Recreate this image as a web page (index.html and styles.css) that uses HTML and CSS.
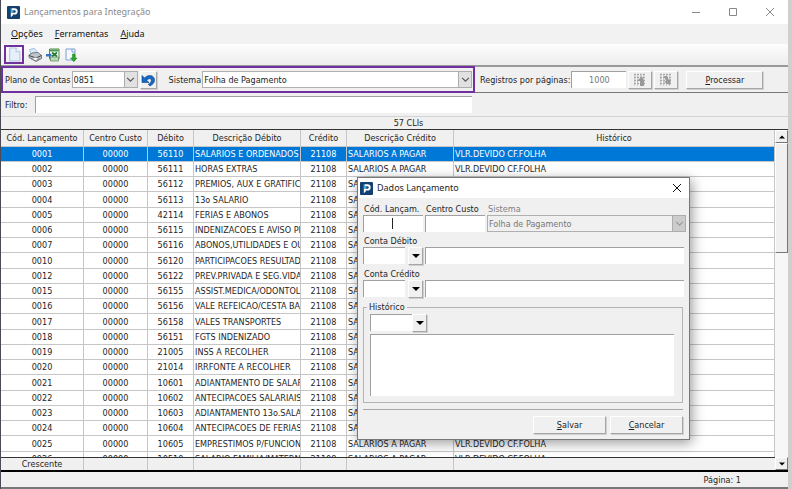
FILE: index.html
```html
<!DOCTYPE html>
<html lang="pt-BR">
<head>
    <meta charset="UTF-8">
    <title>Lançamentos para Integração</title>
    <link rel="stylesheet" href="styles.css">
</head>
<body>
<div class="window">
    <header class="titlebar">
        <svg class="logo" viewBox="0 0 13 13"><rect width="13" height="13" rx="1" fill="#12406f"/><path d="M4.500 3.200H7.500a2.200 2.200 0 0 1 0 4.400H5" fill="none" stroke="#fff" stroke-width="1.900"/><path d="M3.800 6.500v4.700l2-1.600V6.500z" fill="#fff"/><path d="M3.500 2.300l3.500 3-3.200 1.600z" fill="#3fb4ea"/></svg>
        <h1>Lançamentos para Integração</h1>
        <div class="controls">
            <button type="button" aria-label="Minimizar"><svg viewBox="0 0 10 10"><path d="M1 5.500h8"/></svg></button>
            <button type="button" aria-label="Maximizar"><svg viewBox="0 0 10 10"><path d="M1.500 1.500h7v7h-7z"/></svg></button>
            <button type="button" aria-label="Fechar"><svg viewBox="0 0 10 10"><path d="M1 1l8 8M9 1l-8 8"/></svg></button>
        </div>
    </header>
    <nav class="menu">
        <a href="#"><u>O</u>pções</a>
        <a href="#"><u>F</u>erramentas</a>
        <a href="#"><u>A</u>juda</a>
    </nav>
    <div class="toolbar">
        <button type="button" class="marked" aria-label="Novo">
            <svg viewBox="0 0 14 14"><path d="M2.500 1h6l3.500 3.500V13h-9.500z" fill="#e6effa" stroke="#b4c6de"/><path d="M8.500 1v3.500H12" fill="#fff" stroke="#b4c6de"/></svg>
        </button>
        <button type="button" aria-label="Imprimir">
            <svg viewBox="0 0 14 14"><path d="M3 6L1.500 1.500l5-1.200L9.500 5z" fill="#d7eafb" stroke="#8bb0d4" stroke-width=".7"/><path d="M1 7l3-2 6-.5 3.500 3v3L8 13.500l-7-4z" fill="#c2c6cc" stroke="#596069" stroke-width=".8"/><path d="M1 7.500l7 2.500 5.500-2.500" fill="none" stroke="#3d434b"/><path d="M3 10.500l4.500 2 4-2-4-1.200z" fill="#fff" stroke="#666" stroke-width=".6"/></svg>
        </button>
        <button type="button" aria-label="Exportar para Excel">
            <svg viewBox="0 0 14 14"><path d="M3.500 1h9.500v10H3.500z" fill="#fff" stroke="#4d8b4d"/><path d="M4 1.500h8.500v2H4z" fill="#4c9a4c"/><path d="M6 4.500l5 4M11 4.500l-5 4" stroke="#227a2c" stroke-width="1.700"/><path d="M4.500 9h8v4h-8z" fill="#b8dab8" stroke="#5a865a" stroke-width=".7"/><path d="M0 6h3V4l3 3.200-3 3V8.500H0z" fill="#3774c5"/></svg>
        </button>
        <button type="button" aria-label="Baixar">
            <svg viewBox="0 0 14 14"><path d="M2 1h9v11H2z" fill="#f3f8ff" stroke="#7e9fd0"/><path d="M8 1v3h3" fill="none" stroke="#7e9fd0"/><path d="M8.500 6h2.500v4h2L9.800 13.700 6.500 10h2z" fill="#28a628" stroke="#157c15" stroke-width=".5"/></svg>
        </button>
    </div>

    <div class="params">
        <div class="plan">
            <label for="plano">Plano de Contas</label>
            <div class="combo short">
                <select id="plano"><option>0851</option></select>
                <span class="arrow"><svg viewBox="0 0 8 8"><path d="M1 2.500l3 3 3-3"/></svg></span>
            </div>
            <button type="button" class="raised undo" aria-label="Desfazer">
                <svg viewBox="0 0 14 14"><path d="M1 2.500v7h7L5.700 7.300C7.500 5 10.300 5.200 10.300 7.500c0 1.600-1.300 2.600-3 3.700l1.500 1.800c2.800-1.300 4.700-3.300 4.700-6C13.500 2.200 7.500.8 3.500 5z" fill="#1769c4" stroke="#0b4288" stroke-width=".6"/></svg>
            </button>
            <label class="sys" for="sistema">Sistema</label>
            <div class="combo grow">
                <select id="sistema"><option>Folha de Pagamento</option></select>
                <span class="arrow"><svg viewBox="0 0 8 8"><path d="M1 2.500l3 3 3-3"/></svg></span>
            </div>
        </div>
        <div class="paging">
            <label for="registros">Registros por páginas:</label>
            <input id="registros" class="sunken" type="text" value="1000" disabled>
            <button type="button" class="raised page" aria-label="Página anterior" disabled>
                <svg viewBox="0 0 14 14"><path class="dither" d="M1 1.500h12M1 4.500h12M1 7.500h12M1 10.500h12"/><path class="dither odd" d="M1 3h12M1 6h12M1 9h12M1 12h12"/><path class="dark" d="M9 3L4 8h3v5h4V8z"/></svg>
            </button>
            <button type="button" class="raised page" aria-label="Próxima página" disabled>
                <svg viewBox="0 0 14 14"><path class="dither" d="M1 1.500h12M1 4.500h12M1 7.500h12M1 10.500h12"/><path class="dither odd" d="M1 3h12M1 6h12M1 9h12M1 12h12"/><path class="dark" d="M5 3l2 5-2 1 6 3 1-6-2 1-2-4z"/></svg>
            </button>
            <button type="button" class="raised process"><span><u>P</u>rocessar</span></button>
        </div>
    </div>

    <div class="filter">
        <label for="filtro">Filtro:</label>
        <input id="filtro" class="sunken" type="text">
    </div>
    <div class="caption">57 CLIs</div>

    <div class="grid">
        <div class="rows">
            <table>
                <colgroup>
                    <col class="c-code"><col class="c-center"><col class="c-account"><col class="c-desc"><col class="c-account"><col class="c-desc"><col>
                </colgroup>
                <thead>
                    <tr><th>Cód. Lançamento</th><th>Centro Custo</th><th>Débito</th><th>Descrição Débito</th><th>Crédito</th><th>Descrição Crédito</th><th>Histórico</th></tr>
                </thead>
                <tbody>
                    <tr class="on"><td>0001</td><td>00000</td><td>56110</td><td>SALARIOS E ORDENADOS</td><td>21108</td><td>SALARIOS A PAGAR</td><td>VLR.DEVIDO CF.FOLHA</td></tr>
                    <tr><td>0002</td><td>00000</td><td>56111</td><td>HORAS EXTRAS</td><td>21108</td><td>SALARIOS A PAGAR</td><td>VLR.DEVIDO CF.FOLHA</td></tr>
                    <tr><td>0003</td><td>00000</td><td>56112</td><td>PREMIOS, AUX E GRATIFICACOES</td><td>21108</td><td>SALARIOS A PAGAR</td><td>VLR.DEVIDO CF.FOLHA</td></tr>
                    <tr><td>0004</td><td>00000</td><td>56113</td><td>13o SALARIO</td><td>21108</td><td>SALARIOS A PAGAR</td><td>VLR.DEVIDO CF.FOLHA</td></tr>
                    <tr><td>0005</td><td>00000</td><td>42114</td><td>FERIAS E ABONOS</td><td>21108</td><td>SALARIOS A PAGAR</td><td>VLR.DEVIDO CF.FOLHA</td></tr>
                    <tr><td>0006</td><td>00000</td><td>56115</td><td>INDENIZACOES E AVISO PREVIO</td><td>21108</td><td>SALARIOS A PAGAR</td><td>VLR.DEVIDO CF.FOLHA</td></tr>
                    <tr><td>0007</td><td>00000</td><td>56116</td><td>ABONOS,UTILIDADES E OUTROS</td><td>21108</td><td>SALARIOS A PAGAR</td><td>VLR.DEVIDO CF.FOLHA</td></tr>
                    <tr><td>0010</td><td>00000</td><td>56120</td><td>PARTICIPACOES RESULTADOS</td><td>21108</td><td>SALARIOS A PAGAR</td><td>VLR.DEVIDO CF.FOLHA</td></tr>
                    <tr><td>0012</td><td>00000</td><td>56122</td><td>PREV.PRIVADA E SEG.VIDA</td><td>21108</td><td>SALARIOS A PAGAR</td><td>VLR.DEVIDO CF.FOLHA</td></tr>
                    <tr><td>0015</td><td>00000</td><td>56155</td><td>ASSIST.MEDICA/ODONTOLOGICA</td><td>21108</td><td>SALARIOS A PAGAR</td><td>VLR.DEVIDO CF.FOLHA</td></tr>
                    <tr><td>0016</td><td>00000</td><td>56156</td><td>VALE REFEICAO/CESTA BASICA</td><td>21108</td><td>SALARIOS A PAGAR</td><td>VLR.DEVIDO CF.FOLHA</td></tr>
                    <tr><td>0017</td><td>00000</td><td>56158</td><td>VALES TRANSPORTES</td><td>21108</td><td>SALARIOS A PAGAR</td><td>VLR.DEVIDO CF.FOLHA</td></tr>
                    <tr><td>0018</td><td>00000</td><td>56151</td><td>FGTS INDENIZADO</td><td>21108</td><td>SALARIOS A PAGAR</td><td>VLR.DEVIDO CF.FOLHA</td></tr>
                    <tr><td>0019</td><td>00000</td><td>21005</td><td>INSS A RECOLHER</td><td>21108</td><td>SALARIOS A PAGAR</td><td>VLR.DEVIDO CF.FOLHA</td></tr>
                    <tr><td>0020</td><td>00000</td><td>21014</td><td>IRRFONTE A RECOLHER</td><td>21108</td><td>SALARIOS A PAGAR</td><td>VLR.DEVIDO CF.FOLHA</td></tr>
                    <tr><td>0021</td><td>00000</td><td>10601</td><td>ADIANTAMENTO DE SALARIOS</td><td>21108</td><td>SALARIOS A PAGAR</td><td>VLR.DEVIDO CF.FOLHA</td></tr>
                    <tr><td>0022</td><td>00000</td><td>10602</td><td>ANTECIPACOES SALARIAIS</td><td>21108</td><td>SALARIOS A PAGAR</td><td>VLR.DEVIDO CF.FOLHA</td></tr>
                    <tr><td>0023</td><td>00000</td><td>10603</td><td>ADIANTAMENTO 13o.SALARIO</td><td>21108</td><td>SALARIOS A PAGAR</td><td>VLR.DEVIDO CF.FOLHA</td></tr>
                    <tr><td>0024</td><td>00000</td><td>10604</td><td>ANTECIPACOES DE FERIAS</td><td>21108</td><td>SALARIOS A PAGAR</td><td>VLR.DEVIDO CF.FOLHA</td></tr>
                    <tr><td>0025</td><td>00000</td><td>10605</td><td>EMPRESTIMOS P/FUNCIONARIOS</td><td>21108</td><td>SALARIOS A PAGAR</td><td>VLR.DEVIDO CF.FOLHA</td></tr>
                    <tr><td>0026</td><td>00000</td><td>10510</td><td>SALARIO FAMILIA/MATERNIDADE</td><td>21108</td><td>SALARIOS A PAGAR</td><td>VLR.DEVIDO CF.FOLHA</td></tr>
                </tbody>
            </table>
        </div>
        <div class="scroll">
            <button type="button" aria-label="Subir"><svg viewBox="0 0 8 8"><path d="M1 5.500h6l-3-3z"/></svg></button>
            <div class="thumb"></div>
            <div class="track"></div>
            <button type="button" aria-label="Descer"><svg viewBox="0 0 8 8"><path d="M1 2.500h6l-3 3z"/></svg></button>
        </div>
        <div class="summary">
            <span class="s-code">Crescente</span><span class="s-center"></span><span class="s-account"></span><span class="s-desc"></span><span class="s-account"></span><span class="s-desc"></span>
        </div>
    </div>
    <footer class="status">Página: 1</footer>
</div>

<form class="dialog" role="dialog" aria-labelledby="dlg-title">
    <div class="dlg-title">
        <svg class="logo" viewBox="0 0 13 13"><rect width="13" height="13" rx="1" fill="#12406f"/><path d="M4.500 3.200H7.500a2.200 2.200 0 0 1 0 4.400H5" fill="none" stroke="#fff" stroke-width="1.900"/><path d="M3.800 6.500v4.700l2-1.600V6.500z" fill="#fff"/><path d="M3.500 2.300l3.500 3-3.200 1.600z" fill="#3fb4ea"/></svg>
        <h2 id="dlg-title">Dados Lançamento</h2>
        <button type="button" class="close" aria-label="Fechar"><svg viewBox="0 0 10 10"><path d="M1 1l8 8M9 1l-8 8"/></svg></button>
    </div>
    <div class="dlg-body">
        <div class="line first">
            <div class="field code">
                <label for="cod">Cód. Lançam.</label>
                <div class="caret-box"><input id="cod" class="sunken" type="text"><i class="caret"></i></div>
            </div>
            <div class="field code">
                <label for="centro">Centro Custo</label>
                <input id="centro" class="sunken" type="text">
            </div>
            <div class="field grow off">
                <label for="sis">Sistema</label>
                <div class="combo">
                    <select id="sis" disabled><option>Folha de Pagamento</option></select>
                    <span class="arrow"><svg viewBox="0 0 8 8"><path d="M1 2.500l3 3 3-3"/></svg></span>
                </div>
            </div>
        </div>
        <div class="field account">
            <label for="debito">Conta Débito</label>
            <div class="line">
                <input id="debito" class="sunken num" type="text">
                <button type="button" class="raised drop" aria-label="Buscar conta débito"><svg viewBox="0 0 8 8"><path d="M0 2h8L4 6z"/></svg></button>
                <input class="sunken name" type="text" aria-label="Descrição da conta débito">
            </div>
        </div>
        <div class="field account">
            <label for="credito">Conta Crédito</label>
            <div class="line">
                <input id="credito" class="sunken num" type="text">
                <button type="button" class="raised drop" aria-label="Buscar conta crédito"><svg viewBox="0 0 8 8"><path d="M0 2h8L4 6z"/></svg></button>
                <input class="sunken name" type="text" aria-label="Descrição da conta crédito">
            </div>
        </div>
        <fieldset>
            <legend>Histórico</legend>
            <div class="line">
                <input class="sunken num" type="text" aria-label="Código do histórico">
                <button type="button" class="raised drop" aria-label="Buscar histórico"><svg viewBox="0 0 8 8"><path d="M0 2h8L4 6z"/></svg></button>
            </div>
            <textarea class="sunken" aria-label="Texto do histórico"></textarea>
        </fieldset>
        <div class="actions">
            <button type="submit" class="raised"><span><u>S</u>alvar</span></button>
            <button type="button" class="raised"><span><u>C</u>ancelar</span></button>
        </div>
    </div>
</form>
</body>
</html>
```
FILE: styles.css
```css
* {
    box-sizing: border-box;
    margin: 0;
    padding: 0;
}

body {
    height: 100vh;
    overflow: hidden;
    padding: 0 4px 0 1px;
    background: linear-gradient(90deg, #4b4b55 1px, #cfcfcf 1px);
    color: #1e1e1e;
    font-family: "DejaVu Sans Condensed", "DejaVu Sans", sans-serif;
    font-size: 9px;
    line-height: 12px;
}
button, input, select, textarea {
    font: inherit;
    color: inherit;
    border: 0;
    border-radius: 0;
    background: none;
}
svg {
    display: block;
}
.window {
    display: flex;
    flex-direction: column;
    height: 100%;
    background: #f0f0f0;
}

/* title bar */
.titlebar {
    display: flex;
    align-items: center;
    height: 24px;
    padding-left: 6px;
    background: #fff;
    color: #888;
}
.logo {
    width: 13px;
    height: 13px;
}
h1, h2 {
    flex: 1;
    margin-left: 4px;
    font-family: "Noto Sans", sans-serif;
    font-size: 9px;
    font-weight: normal;
}
.controls {
    display: flex;
}
.controls button {
    width: 37px;
    height: 22px;
}
.controls svg, .close svg {
    width: 10px;
    height: 10px;
    margin: 0 auto;
    fill: none;
    stroke: #888;
}
.menu {
    display: flex;
    gap: 12px;
    height: 20px;
    padding-left: 10px;
    align-items: center;
    background: #f2f2f2;
    font-family: "Noto Sans", sans-serif;
}
.menu a {
    color: #111;
    text-decoration: none;
}
.toolbar {
    display: flex;
    align-items: center;
    gap: 4px;
    height: 21px;
    padding-left: 3px;
    background: linear-gradient(#fdfdfd, #ededed);
}
.toolbar button {
    width: 14px;
    height: 14px;
}
.toolbar .marked {
    width: 20px;
    height: 19px;
    border: 2px solid #7030a0;
}
.toolbar .marked svg {
    height: 15px;
    margin: 0 auto;
}

/* controls shared by the window and the dialog */
.sunken {
    min-width: 0;
    height: 17px;
    padding: 0 3px;
    border-top: 1px solid #a0a0a0;
    border-left: 1px solid #a0a0a0;
    background: #fff;
}
.raised {
    height: 18px;
    border: 1px solid;
    border-color: #fff #a6a6a6 #a6a6a6 #fff;
    background: #f0f0f0;
    box-shadow: 1px 1px #d0d0d0;
}
.raised svg {
    width: 14px;
    height: 14px;
    margin: 0 auto;
}
.combo {
    position: relative;
    height: 17px;
}
.combo select {
    appearance: none;
    display: block;
    width: 100%;
    height: 100%;
    padding: 0 16px 0 1px;
    border: 1px solid #b0b0b0;
    background: #fff;
}
.arrow {
    position: absolute;
    top: 0;
    right: 0;
    display: grid;
    place-items: center;
    width: 14px;
    height: 100%;
    border: 1px solid #adadad;
    background: #e1e1e1;
    pointer-events: none;
}
.arrow svg {
    width: 9px;
    height: 9px;
    fill: none;
    stroke: #555;
}
.grow {
    flex: 1;
}

.params {
    display: flex;
    height: 28px;
    border-top: 2px solid #999;
    border-bottom: 1px solid #777;
}
.plan {
    display: flex;
    align-items: center;
    flex: 0 1 474px;
    margin: -1px 0 -1px 0;
    padding: 0 1px 0 2px;
    border: 2px solid #7030a0;
}
.short {
    width: 66px;
    margin: 0 2px 0 1px;
}
.undo {
    width: 17px;
}
.sys {
    margin: 0 1px 0 12px;
}
.paging {
    display: flex;
    align-items: center;
    gap: 2px;
    padding-left: 5px;
}
.paging input {
    width: 55px;
    margin-left: -1px;
    color: #777;
    text-align: center;
}
.page {
    width: 24px;
}
.dither {
    stroke: #a9a9a9;
    stroke-width: 1.5;
    stroke-dasharray: 2 1;
}
.odd {
    stroke: #c2c2c2;
    stroke-dasharray: 1 2;
}
.dark {
    fill: #999;
}
.process {
    width: 77px;
    margin-left: 6px;
}
.filter {
    display: flex;
    align-items: center;
    gap: 7px;
    height: 24px;
    padding-left: 4px;
    border-bottom: 1px solid #d4d4d4;
}
.filter input {
    flex: 0 1 437px;
}
.caption {
    height: 12px;
    padding-left: 28px;
    text-align: center;
}

/* data grid */
.grid {
    display: grid;
    grid-template-columns: 1fr 13px;
    grid-template-rows: 1fr 13px;
    flex: 1;
    min-height: 0;
    border-top: 1px solid #333;
    border-bottom: 2px solid #000;
}
.rows {
    min-height: 0;
    overflow: hidden;
    background: #fff;
}
table {
    width: 100%;
    table-layout: fixed;
    border-collapse: separate;
    border-spacing: 0;
}
.c-code {
    width: 83px;
}
.c-center {
    width: 64px;
}
.c-account {
    width: 46px;
}
.c-desc {
    width: 107px;
}
th, td {
    height: 15px;
    overflow: hidden;
    border-right: 1px solid #c6c6c6;
    border-bottom: 1px solid #c6c6c6;
    font-weight: normal;
    text-align: center;
    white-space: nowrap;
}
th {
    height: 17px;
    background: #f0f0f0;
}
tr:nth-child(4n) td {
    height: 16px;
}
td:nth-child(4), td:nth-child(6), td:nth-child(7) {
    padding-left: 1px;
    text-align: left;
}
.on td {
    background: #0078d7;
    color: #fff;
}
.scroll {
    display: flex;
    flex-direction: column;
    grid-row: 1 / 3;
    grid-column: 2;
    background: #f7f7f7;
}
.scroll button, .thumb {
    height: 13px;
    border: 1px solid;
    border-color: #fff #777 #777 #fff;
    background: #f0f0f0;
}
.scroll svg {
    width: 8px;
    height: 8px;
    margin: 0 auto;
}
.thumb {
    flex: 109;
}
.track {
    flex: 205;
}
.summary {
    display: flex;
    border-top: 1px solid #333;
    background: #f0f0f0;
    text-align: center;
}
.summary span {
    border-right: 1px solid #c6c6c6;
}
.s-code {
    width: 83px;
}
.s-center {
    width: 64px;
}
.s-account {
    width: 46px;
}
.s-desc {
    width: 107px;
}
.status {
    height: 17px;
    padding: 2px 47px 0 0;
    border-bottom: 2px solid #777;
    text-align: right;
}

/* dialog over the grid */
.dialog {
    position: absolute;
    top: 177px;
    left: 357px;
    width: 333px;
    border: 1px solid #777;
    background: #f0f0f0;
    box-shadow: 2px 3px 12px rgba(0, 0, 0, .4);
}
.dlg-title {
    display: flex;
    align-items: center;
    height: 20px;
    padding: 0 6px 0 2px;
    background: #fff;
}
.close {
    width: 12px;
    height: 12px;
}
.close svg {
    stroke: #111;
}
.dlg-body {
    padding: 5px 3px 5px 5px;
}
.line {
    display: flex;
}
.first {
    gap: 2px;
}
.field label {
    display: block;
    padding-left: 1px;
}
.code {
    width: 60px;
}
.code input {
    display: block;
    width: 100%;
}
.off {
    color: #808080;
}
.off select {
    background: #f0f0f0;
    color: #777;
    opacity: 1;
}
.off .arrow {
    background: #ccc;
}
.off .arrow svg {
    stroke: #999;
}
.caret-box {
    position: relative;
}
.caret {
    position: absolute;
    top: 3px;
    left: 29px;
    width: 1px;
    height: 11px;
    background: #222;
}
.account {
    margin-top: 3px;
    padding-right: 2px;
}
.num {
    width: 42px;
}
.drop {
    width: 15px;
}
.drop svg {
    width: 8px;
    height: 8px;
}
.account .drop {
    margin: 0 2px 0 3px;
}
.name {
    flex: 1;
}
fieldset {
    margin: 3px 3px 0 0;
    padding: 1px 8px 6px 6px;
    border: 1px solid #b4b4b4;
}
legend {
    padding: 0 2px;
    margin-left: -3px;
}
textarea.sunken {
    display: block;
    width: 100%;
    height: 62px;
    margin-top: 2px;
    resize: none;
}
.actions {
    display: flex;
    justify-content: flex-end;
    gap: 4px;
    margin: 6px 3px 0 0;
    padding-top: 6px;
    border-top: 1px solid #a6a6a6;
}
.actions button {
    width: 73px;
}
```
